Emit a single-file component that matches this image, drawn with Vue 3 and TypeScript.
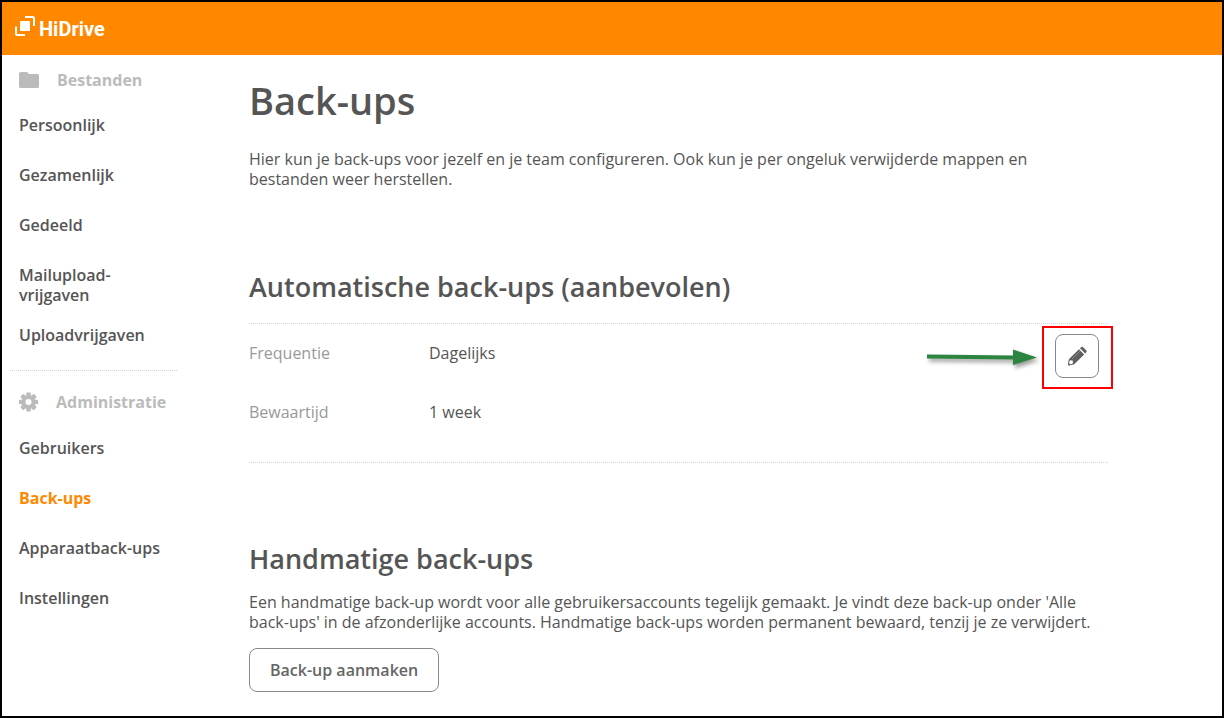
<script setup lang="ts">
import { ref } from 'vue'

interface NavItem {
  label: string
  multiline?: boolean
}

const fileItems: NavItem[] = [
  { label: 'Persoonlijk' },
  { label: 'Gezamenlijk' },
  { label: 'Gedeeld' },
  { label: 'Mailupload-vrijgaven', multiline: true },
  { label: 'Uploadvrijgaven' },
]

const adminItems: NavItem[] = [
  { label: 'Gebruikers' },
  { label: 'Back-ups' },
  { label: 'Apparaatback-ups' },
  { label: 'Instellingen' },
]

const active = ref('Back-ups')

const settings = [
  { name: 'Frequentie', value: 'Dagelijks' },
  { name: 'Bewaartijd', value: '1 week' },
]
</script>

<template>
  <div class="page">
    <header class="topbar">
      <a class="brand" href="#">
        <svg class="brand-mark" viewBox="0 0 20 20" aria-hidden="true">
          <rect x="5" y="5" width="10" height="10" rx="1" fill="#fff" />
          <path d="M10 1h7.500q1.500 0 1.500 1.500V10" fill="none" stroke="#fff" stroke-width="2" />
          <path d="M1 10.500v7q0 1.500 1.500 1.500H10" fill="none" stroke="#fff" stroke-width="2" />
        </svg>
        <span>HiDrive</span>
      </a>
    </header>

    <div class="body">
      <nav class="sidebar">
        <section class="group">
          <h2 class="group-title">
            <svg class="group-icon" viewBox="0 0 20 20" aria-hidden="true">
              <path d="M2 2h6l2 2h8.500q1.500 0 1.500 1.500v11q0 1.500-1.500 1.500h-17q-1.500 0-1.500-1.500v-13q0-1.500 2-1.500z" fill="#bbb" />
            </svg>
            <span>Bestanden</span>
          </h2>
          <ul>
            <li v-for="item in fileItems" :key="item.label">
              <a href="#" :class="{ multiline: item.multiline }" @click.prevent="active = item.label">{{ item.label }}</a>
            </li>
          </ul>
        </section>
        <section class="group admin">
          <h2 class="group-title">
            <svg class="group-icon" viewBox="0 0 20 20" aria-hidden="true">
              <g fill="#bbb">
                <rect v-for="n in 4" :key="n" x="7.200" y="0.400" width="4.600" height="19.200" rx="1" :transform="`rotate(${n * 45} 9.500 10)`" />
                <circle cx="9.500" cy="10" r="7" />
              </g>
              <circle cx="9.500" cy="10" r="3" fill="#fff" />
            </svg>
            <span>Administratie</span>
          </h2>
          <ul>
            <li v-for="item in adminItems" :key="item.label">
              <a href="#" :class="{ active: active === item.label }" @click.prevent="active = item.label">{{ item.label }}</a>
            </li>
          </ul>
        </section>
      </nav>

      <main class="content">
        <h1>Back-ups</h1>
        <p class="intro">
          Hier kun je back-ups voor jezelf en je team configureren. Ook kun je per ongeluk verwijderde mappen en bestanden weer herstellen.
        </p>

        <h2 class="section-title">Automatische back-ups (aanbevolen)</h2>
        <div class="panel">
          <dl>
            <div v-for="row in settings" :key="row.name" class="row">
              <dt>{{ row.name }}</dt>
              <dd>{{ row.value }}</dd>
            </div>
          </dl>
          <div class="edit">
            <button class="btn icon-btn" type="button" aria-label="Bewerken">
              <svg viewBox="0 0 20 20" aria-hidden="true">
                <path d="M12 3.200l5.200 5.200-9.400 9.400q-.6.600-1.400.8l-4 .8q-1.800.3-1.500-1.500l.8-4q.2-.8.800-1.400z" fill="#606060" />
                <path d="M13 2.200l.9-.9q1.100-1 2.200 0l3 3q1 1.100 0 2.200l-.9.900z" fill="#606060" />
                <path d="M3.300 14.300l2.400.3.300 2.400-1.300 1-1.700.2-.9-.9.200-1.700z" fill="#fff" />
                <path d="M5 13l8-8" stroke="#999" stroke-width=".8" />
              </svg>
            </button>
            <span class="highlight"></span>
            <svg class="arrow" viewBox="0 0 116 30" aria-hidden="true">
              <path d="M1 6.500l86 1V1.500L111 9.500 87 17v-5.500L1 10.500z" fill="#2b8540" />
            </svg>
          </div>
        </div>

        <h2 class="section-title">Handmatige back-ups</h2>
        <p class="manual">
          Een handmatige back-up wordt voor alle gebruikersaccounts tegelijk gemaakt. Je vindt deze back-up onder 'Alle back-ups' in de afzonderlijke accounts. Handmatige back-ups worden permanent bewaard, tenzij je ze verwijdert.
        </p>
        <button class="btn" type="button">Back-up aanmaken</button>
      </main>
    </div>
  </div>
</template>

<style>
body {
  margin: 0;
}
</style>

<style scoped>
* {
  box-sizing: border-box;
}

.page {
  min-height: 100vh;
  border: 2px solid #000;
  background: #fff;
  color: #555;
  font: 16px/20px "Open Sans", "Noto Sans", sans-serif;
}

h1,
h2,
p,
ul,
dl,
dd {
  margin: 0;
  padding: 0;
}

ul {
  list-style: none;
}

a {
  color: inherit;
  text-decoration: none;
}

.topbar {
  display: flex;
  align-items: center;
  height: 53px;
  padding: 0 13px;
  background: #ff8800;
}

.brand {
  display: flex;
  align-items: center;
  gap: 4px;
  color: #fff;
  font-family: Roboto, "Open Sans", sans-serif;
  font-size: 20px;
  font-weight: 700;
}

.brand-mark {
  width: 20px;
  height: 20px;
  margin-bottom: 6px;
}

.body {
  display: flex;
}

.sidebar {
  flex: 0 0 175px;
  padding: 15px 0 0 8px;
  font-weight: 600;
}

.group-title {
  display: flex;
  align-items: center;
  gap: 18px;
  padding-left: 9px;
  margin-bottom: 10px;
  color: #bbb;
  font-size: 16px;
  font-weight: 700;
}

.group-icon {
  width: 20px;
  height: 20px;
}

.group li a {
  display: block;
  width: 150px;
  padding: 15px 0 15px 9px;
}

.group li .multiline {
  width: 115px;
  padding-bottom: 5px;
}

.group li .active {
  color: #ff8800;
  font-weight: 700;
}

.admin {
  margin-top: 10px;
  padding-top: 22px;
  background: repeating-linear-gradient(90deg, #d4d4d4 0 1px, transparent 1px 2px) top / 100% 1px no-repeat;
}

.admin .group-title {
  gap: 17px;
  margin-bottom: 11px;
}

.content {
  flex: 0 1 931px;
  padding: 20px 0 24px 72px;
}

h1 {
  font-size: 38px;
  line-height: 50px;
  font-weight: 600;
}

.intro {
  max-width: 800px;
  margin: 24px 0 80px;
}

.section-title {
  font-size: 27px;
  line-height: 36px;
  font-weight: 600;
}

.panel {
  display: flex;
  justify-content: space-between;
  margin: 18px 0 78px;
  padding: 11px 9px 41px 0;
  background:
    repeating-linear-gradient(90deg, #d4d4d4 0 1px, transparent 1px 2px) top / 100% 1px no-repeat,
    repeating-linear-gradient(90deg, #d4d4d4 0 1px, transparent 1px 2px) bottom / 100% 1px no-repeat;
}

.panel dl {
  display: grid;
  gap: 39px;
  padding-top: 9px;
}

.row {
  display: grid;
  grid-template-columns: 180px auto;
}

.row dt {
  color: #999;
}

.btn {
  height: 44px;
  padding: 0 20px;
  border: 1px solid #888;
  border-radius: 8px;
  background: #fff;
  color: #666;
  font: inherit;
  font-weight: 600;
  cursor: pointer;
}

.edit {
  position: relative;
}

.icon-btn {
  display: flex;
  align-items: center;
  justify-content: center;
  width: 44px;
  padding: 0;
}

.icon-btn svg {
  width: 20px;
  height: 20px;
}

.highlight {
  position: absolute;
  top: -8px;
  left: -13px;
  width: 71px;
  height: 63px;
  border: 2px solid #f00;
  pointer-events: none;
}

.arrow {
  position: absolute;
  top: 14px;
  right: 57px;
  width: 116px;
  height: 30px;
  filter: drop-shadow(2px 3px 2px rgba(0, 0, 0, 0.4));
  pointer-events: none;
}

.manual {
  max-width: 850px;
  margin: 15px 0 16px;
}
</style>
